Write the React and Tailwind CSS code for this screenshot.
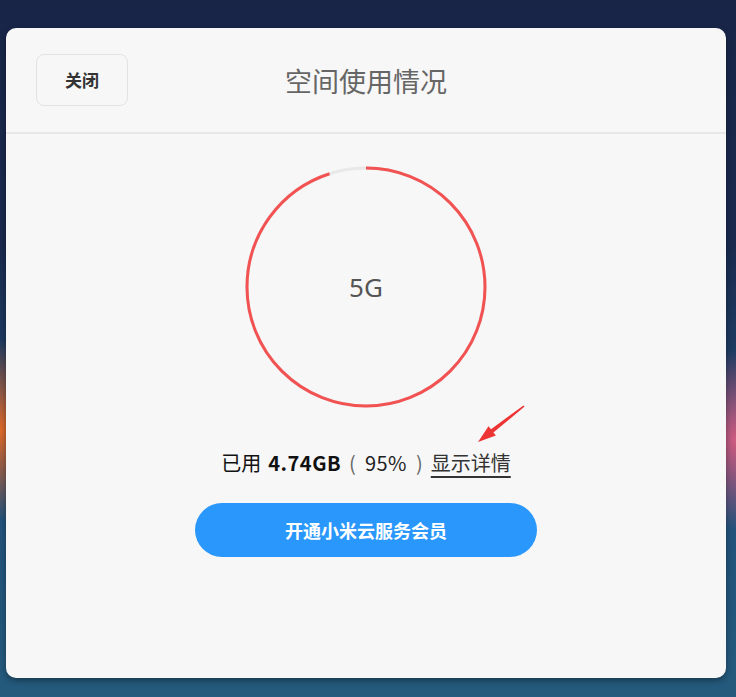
import React from "react";

function Ring() {
  const r = 119;
  const c = 2 * Math.PI * r;
  const used = 0.95;
  return (
    <div className="relative w-[244px] h-[244px]">
      <svg width="244" height="244" viewBox="0 0 244 244" className="block">
        <circle cx="122" cy="122" r={r} fill="none" stroke="#e8e8e8" strokeWidth="3" />
        <circle
          cx="122"
          cy="122"
          r={r}
          fill="none"
          stroke="#f25252"
          strokeWidth="3"
          strokeDasharray={`${c * used} ${c}`}
          transform="rotate(-90 122 122)"
        />
      </svg>
      <div className="absolute inset-0 flex items-center justify-center text-[26px] text-[#555] font-['Noto_Sans','Noto_Sans_CJK_SC',sans-serif]">
        5G
      </div>
    </div>
  );
}

export default function App() {
  return (
    <div className="w-full h-[697px] overflow-hidden pt-[28px] pl-[6px] pr-[10px] bg-[radial-gradient(ellipse_60px_90px_at_0px_430px,#e0692a_0%,rgba(224,105,42,0)_100%),radial-gradient(ellipse_60px_90px_at_736px_440px,#d05a80_0%,rgba(208,90,128,0)_100%),linear-gradient(180deg,#182547_0%,#1a2a4e_35%,#22507a_70%,#245b7d_100%)] font-['Noto_Sans_CJK_SC','Noto_Sans',sans-serif]">
      <div className="relative h-[650px] bg-[#f7f7f7] rounded-[10px] shadow-[0_3px_6px_rgba(0,0,0,0.35)] flex flex-col">
        <div className="h-[106px] flex items-center px-[30px] border-b-2 border-[#e8e8e8]">
          <button className="w-[92px] h-[52px] rounded-[8px] border border-[#e2e2e2] bg-[#f7f7f7] text-[17px] font-bold text-[#333] flex items-center justify-center">
            关闭
          </button>
          <div className="flex-1 text-center text-[27px] text-[#666] leading-none">空间使用情况</div>
          <div className="w-[92px]" />
        </div>
        <div className="flex flex-col items-center pt-[31px]">
          <Ring />
          <div className="mt-[40px] text-[20px] text-[#111] leading-[28px] flex items-center">
            <span className="mr-[7px]">已用</span>
            <span className="font-bold tracking-[0.5px]">4.74GB</span>
            <span className="text-[#666] ml-[8px]">(</span>
            <span className="text-[#222] mx-[9px] tracking-[0.5px]">95%</span>
            <span className="text-[#666] mr-[8px]">)</span>
            <span className="underline underline-offset-[5px] text-[#333] decoration-[#333]">显示详情</span>
          </div>
          <button className="mt-[26px] w-[342px] h-[54px] rounded-full bg-[#2997fb] text-white text-[18px] font-bold">
            开通小米云服务会员
          </button>
        </div>
        <svg className="absolute left-[470px] top-[375px]" width="51" height="42" viewBox="0 0 51 42">
          <polygon points="2,39 19.9,32.6 17.4,29.5 48.6,3.6 47.4,2.4 15,26.3 12.5,23.2" fill="#ee3535" />
        </svg>
      </div>
    </div>
  );
}
